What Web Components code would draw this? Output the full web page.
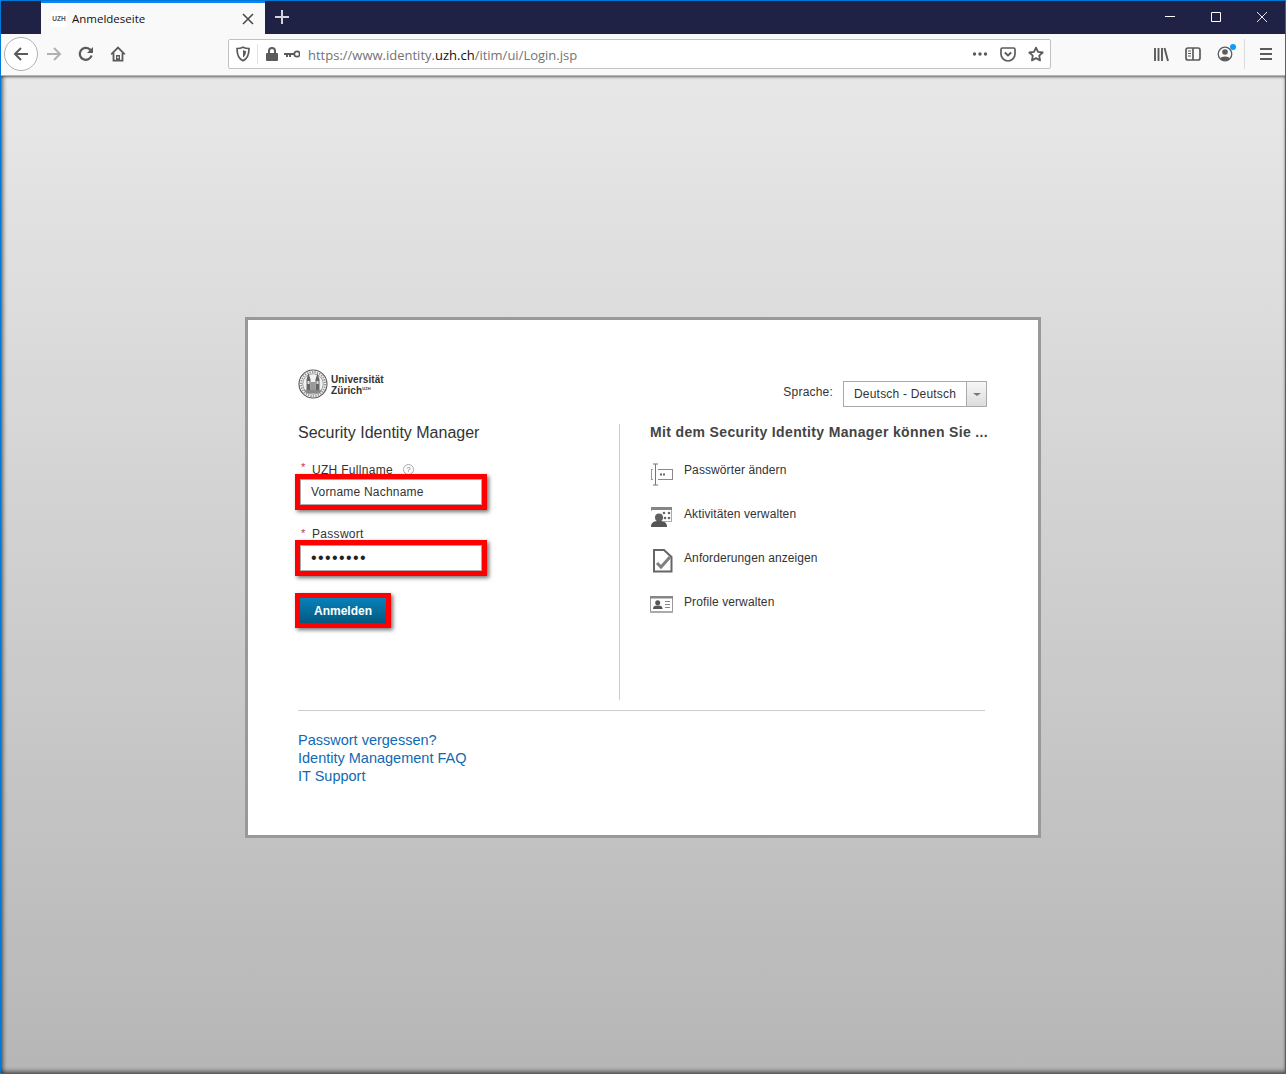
<!DOCTYPE html>
<html lang="de">
  <head>
    <meta charset="UTF-8" />
    <title>Anmeldeseite</title>
    <style>
      html, body { margin: 0; height: 100%; }
      body {
        width: 1286px;
        height: 1074px;
        overflow: hidden;
        display: flex;
        flex-direction: column;
        box-sizing: border-box;
        border: 1px solid #0078d7;
        font-family: "Liberation Sans", Arial, sans-serif;
      }
      login-card a { color: inherit; text-decoration: none; display: block; }
    </style>
  </head>
  <body>
    <browser-tabs title-text="Anmeldeseite"></browser-tabs>
    <browser-toolbar></browser-toolbar>
    <login-page>
      <login-card>
        <a slot="links" href="#">Passwort vergessen?</a>
        <a slot="links" href="#">Identity Management FAQ</a>
        <a slot="links" href="#">IT Support</a>
        <feature-item slot="features" icon="password">Passwörter ändern</feature-item>
        <feature-item slot="features" icon="activity">Aktivitäten verwalten</feature-item>
        <feature-item slot="features" icon="request">Anforderungen anzeigen</feature-item>
        <feature-item slot="features" icon="profile">Profile verwalten</feature-item>
      </login-card>
    </login-page>

    <script>
      // toolbar glyphs, all in a 16x16 box
      const TOOL_ICONS = {
        back: '<path d="M15 8H2M8 2L2 8l6 6" fill="none" stroke-width="2"/>',
        forward: '<path d="M1 8h13M8 2l6 6-6 6" fill="none" stroke-width="2"/>',
        reload: '<path d="M13.600 9.500A6 6 0 1 1 11.800 3.400L14 5.500" fill="none" stroke-width="2.200"/><path d="M15 1v6H9z" stroke="none"/>',
        home: '<path d="M1.200 8.300L8 1.500l6.800 6.800" fill="none" stroke-width="1.800"/><path d="M3.500 7v7.600h9V7" fill="none" stroke-width="1.800"/><path fill-rule="evenodd" d="M6 9h4v6H6zM7.300 10.500v1.800h1.400v-1.800z" stroke="none"/>',
        library: '<path d="M2 2v13M5.500 2v13M9 2v13M11.500 2l3.500 13" fill="none" stroke-width="1.900"/>',
        sidebar: '<rect x="1" y="2" width="14" height="12" rx="2" fill="none" stroke-width="1.700"/><path d="M8 2v12" fill="none" stroke-width="1.700"/><path d="M3 5h3M3 7.500h3M3 10h3" fill="none" stroke-width="1"/>',
        account: '<circle cx="8" cy="8" r="6.800" fill="none" stroke-width="1.300"/><circle cx="8" cy="6" r="2.800" stroke="none"/><path d="M3.200 12.500C4 9.800 12 9.800 12.800 12.500A6.500 6.500 0 0 1 3.200 12.500z" stroke="none"/>',
        menu: '<path d="M2 3h12M2 8h12M2 13h12" fill="none" stroke-width="2"/>',
        shield: '<path d="M8 1.200c2 1 4 1.300 6 1.300 0 5-1 10-6 12.300C3 12.500 2 7.500 2 2.500c2 0 4-.3 6-1.300z" fill="none" stroke-width="1.700"/><path d="M8 4v7.500c2-1 3-3.500 3-6.500-1 0-2-.3-3-1z" stroke="none"/>',
        lock: '<path d="M3 7h10a1 1 0 0 1 1 1v6a1 1 0 0 1-1 1H3a1 1 0 0 1-1-1V8a1 1 0 0 1 1-1z" stroke="none"/><path d="M5 7.500V5a3 3 0 0 1 6 0v2.500" fill="none" stroke-width="2"/>',
        key: '<circle cx="13" cy="8" r="2.700" fill="none" stroke-width="1.700"/><path d="M0 7h10.500v2H7v2H5V9H4v2H2V9H0z" stroke="none"/>',
        dots: '<circle cx="2.500" cy="8" r="1.700" stroke="none"/><circle cx="8" cy="8" r="1.700" stroke="none"/><circle cx="13.500" cy="8" r="1.700" stroke="none"/>',
        pocket: '<path d="M2.500 2h11A1.500 1.500 0 0 1 15 3.500V8a7 7 0 0 1-14 0V3.500A1.500 1.500 0 0 1 2.500 2z" fill="none" stroke-width="1.700"/><path d="M4.800 6.500L8 9.500l3.200-3" fill="none" stroke-width="1.900"/>',
        star: '<path d="M8 1.600l2 4.300 4.700.6-3.500 3.200.9 4.700L8 12.100l-4.100 2.300.9-4.700L1.300 6.500l4.700-.6z" fill="none" stroke-width="1.800" stroke-linejoin="round"/>'
      };

      class ToolIcon extends HTMLElement {
        constructor() {
          super();
          const shadow = this.attachShadow({ mode: "open" });
          const color = this.getAttribute("color") || "#5b5b5c";
          shadow.innerHTML = `
            <style>
              :host { display: flex; align-items: center; justify-content: center; width: 32px; height: 32px; flex: none; position: relative; }
              :host([slim]) { width: 28px; }
              svg { width: 16px; height: 16px; display: block; }
            </style>
            <svg viewBox="0 0 16 16" fill="${color}" stroke="${color}">${TOOL_ICONS[this.getAttribute("name")]}</svg>
            <slot></slot>`;
        }
      }
      customElements.define("tool-icon", ToolIcon);

      class BrowserTabs extends HTMLElement {
        constructor() {
          super();
          const shadow = this.attachShadow({ mode: "open" });
          shadow.innerHTML = `
            <style>
              :host { display: flex; height: 33px; background: #1f2244; flex: none; font-family: "Open Sans", sans-serif; }
              .tab { margin-left: 40px; width: 224px; height: 33px; box-sizing: border-box; background: #f9f9fa; border-top: 2px solid #0a84ff; display: flex; align-items: center; padding-left: 10px; color: #111; font-size: 11.500px; }
              .fav { width: 16px; height: 16px; background: #fff; color: #555; font: bold 6.500px "Liberation Sans", sans-serif; display: flex; align-items: center; justify-content: center; margin-right: 5px; }
              .label { flex: 1; }
              .close { width: 34px; display: flex; justify-content: center; }
              .plus { width: 34px; display: flex; justify-content: center; align-items: center; margin-bottom: 2px; }
              .spacer { flex: 1; }
              .win { width: 46px; display: flex; justify-content: center; align-items: center; margin-bottom: 2px; }
              svg { display: block; }
            </style>
            <div class="tab">
              <span class="fav">UZH</span>
              <span class="label">${this.getAttribute("title-text")}</span>
              <span class="close"><svg width="12" height="12" viewBox="0 0 12 12"><path d="M1 1l10 10M11 1L1 11" stroke="#474749" stroke-width="1.500"/></svg></span>
            </div>
            <span class="plus"><svg width="14" height="14" viewBox="0 0 14 14"><path d="M7 0v14M0 7h14" stroke="#d4d5dc" stroke-width="2"/></svg></span>
            <span class="spacer"></span>
            <span class="win"><svg width="10" height="10" viewBox="0 0 10 10"><path d="M0 4.500h10" stroke="#fff"/></svg></span>
            <span class="win"><svg width="10" height="10" viewBox="0 0 10 10"><path d="M.5.500h9v9h-9z" fill="none" stroke="#fff"/></svg></span>
            <span class="win"><svg width="10" height="10" viewBox="0 0 10 10"><path d="M0 0l10 10M10 0L0 10" stroke="#fff" stroke-width=".9"/></svg></span>`;
        }
      }
      customElements.define("browser-tabs", BrowserTabs);

      class BrowserToolbar extends HTMLElement {
        constructor() {
          super();
          const shadow = this.attachShadow({ mode: "open" });
          shadow.innerHTML = `
            <style>
              :host { display: flex; align-items: center; height: 42px; flex: none; box-sizing: border-box; background: #f9f9fa; border-bottom: 1px solid #b4b4b4; padding: 0 0 1px 3px; font-family: "Open Sans", sans-serif; }
              .back { width: 34px; height: 34px; box-sizing: border-box; border: 1px solid #b1b1b3; border-radius: 50%; background: #fff; display: flex; align-items: center; justify-content: center; flex: none; }
              .url { margin-left: 94px; width: 823px; height: 30px; box-sizing: border-box; border: 1px solid #c2c2c4; border-radius: 2px; background: #fff; display: flex; align-items: center; flex: none; }
              .sep { width: 1px; height: 20px; background: #e3e3e5; flex: none; }
              .text { flex: 1; font-size: 13px; color: #737373; white-space: nowrap; margin: 2px 0 0 6px; }
              .text b { font-weight: 400; color: #111; }
              .badge { position: absolute; left: 21px; top: 6px; width: 6px; height: 6px; border-radius: 50%; background: #0a9dff; }
              .gap { width: 94px; flex: none; }
              .bar { width: 1px; height: 30px; background: #dcdcde; margin: 0 5px 0 3px; flex: none; }
            </style>
            <span class="back"><tool-icon name="back"></tool-icon></span>
            <tool-icon name="forward" color="#b1b1b3"></tool-icon>
            <tool-icon name="reload"></tool-icon>
            <tool-icon name="home"></tool-icon>
            <div class="url">
              <tool-icon name="shield" slim></tool-icon>
              <span class="sep"></span>
              <tool-icon name="lock" slim></tool-icon>
              <tool-icon name="key" style="width:20px;margin-left:-4px"></tool-icon>
              <span class="text">https://www.identity.<b>uzh.ch</b>/itim/ui/Login.jsp</span>
              <tool-icon name="dots" slim></tool-icon>
              <tool-icon name="pocket" slim></tool-icon>
              <tool-icon name="star" slim></tool-icon>
            </div>
            <span class="gap"></span>
            <tool-icon name="library"></tool-icon>
            <tool-icon name="sidebar"></tool-icon>
            <tool-icon name="account"><span class="badge"></span></tool-icon>
            <span class="bar"></span>
            <tool-icon name="menu"></tool-icon>`;
        }
      }
      customElements.define("browser-toolbar", BrowserToolbar);

      class LoginPage extends HTMLElement {
        constructor() {
          super();
          this.attachShadow({ mode: "open" }).innerHTML = `
            <style>
              :host { display: flex; flex: 1; justify-content: center; align-items: flex-start; box-sizing: border-box; padding-top: 241px; background: linear-gradient(#e8e8e8, #b6b6b6); box-shadow: inset 4px 0 4px -2px rgba(0,0,0,.55), inset -2px 0 3px -2px rgba(0,0,0,.3), inset 0 -4px 4px -2px rgba(0,0,0,.45), inset 0 3px 3px -2px rgba(0,0,0,.5); }
            </style>
            <slot></slot>`;
        }
      }
      customElements.define("login-page", LoginPage);

      // red annotation frame, lies over the label above it
      class RedMark extends HTMLElement {
        constructor() {
          super();
          this.attachShadow({ mode: "open" }).innerHTML = `
            <style>
              :host { display: block; position: relative; box-sizing: border-box; margin-left: -3px; width: 192px; height: 36px; border: 5px solid #f00; box-shadow: 2px 2px 4px rgba(0,0,0,.55); }
              :host([small]) { width: 96px; height: 35px; }
            </style>
            <slot></slot>`;
        }
      }
      customElements.define("red-mark", RedMark);

      class FormField extends HTMLElement {
        constructor() {
          super();
          const help = this.hasAttribute("help") ? '<span class="help">?</span>' : "";
          this.attachShadow({ mode: "open" }).innerHTML = `
            <style>
              :host { display: block; }
              .label { height: 12px; font-size: 12px; line-height: var(--label-line, 14px); color: #333; display: flex; letter-spacing: .3px; padding-left: 3px; }
              .star { color: #c33; width: 11px; font-size: 11px; line-height: 11px; flex: none; }
              .help { margin-left: 10px; width: 11px; height: 11px; box-sizing: border-box; border: 1px solid #aaa; border-radius: 50%; font-size: 8px; line-height: 9px; text-align: center; color: #777; letter-spacing: 0; margin-top: 2px; }
              .box { height: 26px; box-sizing: border-box; border: 1px solid #aaa; background: #fff; padding-left: 10px; font-size: 12px; line-height: 24px; color: #333; letter-spacing: .2px; }
              .dots { letter-spacing: 1.400px; color: #222; font-size: 16px; }
            </style>
            <div class="label"><span class="star">*</span>${this.getAttribute("label")}${help}</div>
            <red-mark><div class="box ${this.hasAttribute("secret") ? "dots" : ""}">${this.getAttribute("value")}</div></red-mark>`;
        }
      }
      customElements.define("form-field", FormField);

      const FEATURE_ICONS = {
        password: '<path d="M8 8h15v11H8V18h14V9H8z" fill="#8a8a8a"/><path d="M1 8h2v1H2v9h1v1H1z" fill="#999"/><path d="M5 3h1v21H5zM3 2.500h5v1H3zM3 23.500h5v1H3z" fill="#777"/><path d="M10 12.500h2v2h-2zM13 12.500h2v2h-2z" fill="#666"/>',
        activity: '<path d="M1 2h21v15h-8v-1h7V5H2v1H1z" fill="#aaa"/><path d="M1 2h21v3H1z" fill="#858585"/><circle cx="14" cy="8" r="1.300" fill="#666"/><circle cx="19" cy="8" r="1.300" fill="#666"/><circle cx="15" cy="13" r="1.300" fill="#666"/><circle cx="19" cy="13" r="1.300" fill="#666"/><circle cx="9" cy="12.500" r="4" fill="#606060"/><path d="M1 22c0-5 3-6 8-6s8 1 8 6z" fill="#555"/>',
        request: '<path d="M4 1h10l7.500 7v14.500H4z" fill="#fff" stroke="#666" stroke-width="2"/><path d="M7 14l4 4 9-10" fill="none" stroke="#808080" stroke-width="3"/>',
        profile: '<rect x=".5" y="3.500" width="22" height="16" fill="#fff" stroke="#999"/><path d="M0 3h23v2.500H0z" fill="#858585"/><path d="M0 18h23v2H0z" fill="#aaa"/><circle cx="7.700" cy="9.700" r="2.500" fill="#555"/><path d="M3 16c0-3 2-3.500 4.700-3.500s4.800.5 4.800 3.500z" fill="#555"/><path d="M15 8.500h5M15 11.500h5M15 14.500h5" stroke="#888"/>'
      };

      class FeatureItem extends HTMLElement {
        constructor() {
          super();
          this.attachShadow({ mode: "open" }).innerHTML = `
            <style>
              :host { display: flex; height: 44px; font-size: 12px; line-height: 14px; color: #333; }
              svg { width: 24px; height: 26px; flex: none; margin-right: 10px; overflow: visible; }
              .text { margin-top: 2px; letter-spacing: .1px; }
            </style>
            <svg viewBox="0 0 24 26">${FEATURE_ICONS[this.getAttribute("icon")]}</svg>
            <span class="text"><slot></slot></span>`;
        }
      }
      customElements.define("feature-item", FeatureItem);

      class UzhLogo extends HTMLElement {
        constructor() {
          super();
          this.attachShadow({ mode: "open" }).innerHTML = `
            <style>
              :host { display: flex; align-items: flex-start; align-self: flex-start; gap: 3px; height: 32px; }
              svg { width: 30px; height: 30px; flex: none; }
              .name { font-size: 10px; line-height: 11px; font-weight: bold; color: #333; padding-top: 5px; letter-spacing: .1px; }
              sup { font-size: 4px; line-height: 0; vertical-align: 4px; }
            </style>
            <svg viewBox="0 0 30 30">
              <circle cx="15" cy="15" r="14" fill="#fff" stroke="#555" stroke-width="1.100"/>
              <circle cx="15" cy="15" r="12" fill="none" stroke="#999" stroke-width="2" stroke-dasharray="1.500 1"/>
              <circle cx="15" cy="15" r="10.300" fill="#f2f2f2" stroke="#777" stroke-width=".7"/>
              <path d="M10.500 4L12.500 10.500V21H8.500V10.500zM19.500 4L21.500 10.500V21h-4V10.500z" fill="#666"/>
              <path d="M12.500 13h5v8h-5z" fill="#999"/>
              <path d="M9.500 12h2v3h-2zM18.500 12h2v3h-2z" fill="#ddd"/>
              <path d="M6 21h18l-2.500 3.500h-13z" fill="#888"/>
            </svg>
            <div class="name">Universität<br>Zürich<sup>UZH</sup></div>`;
        }
      }
      customElements.define("uzh-logo", UzhLogo);

      class LanguageSelect extends HTMLElement {
        constructor() {
          super();
          this.attachShadow({ mode: "open" }).innerHTML = `
            <style>
              :host { display: flex; align-items: center; font-size: 12px; color: #333; letter-spacing: .2px; margin-right: -2px; }
              .lbl { margin: -4px 10px 0 0; }
              .sel { width: 144px; height: 26px; box-sizing: border-box; border: 1px solid #aaa; display: flex; background: #fff; }
              .val { flex: 1; padding-left: 10px; line-height: 24px; }
              .btn { width: 20px; box-sizing: border-box; border-left: 1px solid #aaa; background: linear-gradient(#f7f7f7, #dcdcdc); display: flex; align-items: center; justify-content: center; }
              .btn i { width: 0; height: 0; border: 4px solid transparent; border-top: 3px solid #777; border-bottom: 0; }
            </style>
            <span class="lbl">Sprache:</span>
            <div class="sel"><span class="val">Deutsch - Deutsch</span><span class="btn"><i></i></span></div>`;
        }
      }
      customElements.define("language-select", LanguageSelect);

      class LoginCard extends HTMLElement {
        constructor() {
          super();
          this.attachShadow({ mode: "open" }).innerHTML = `
            <style>
              :host { display: block; box-sizing: border-box; width: 796px; height: 521px; border: 3px solid #999; background: #fff; padding: 49px 53px 0 50px; }
              header { display: flex; justify-content: space-between; align-items: flex-end; height: 38px; }
              .cols { display: flex; margin-top: 17px; height: 276px; }
              .left { width: 321px; flex: none; border-right: 1px solid #ccc; }
              .right { padding-left: 30px; }
              h1 { margin: 0 0 20px; font-size: 16px; line-height: 18px; font-weight: 400; color: #333; }
              h2 { margin: 0 0 21px; font-size: 14px; line-height: 16px; font-weight: bold; color: #444; white-space: nowrap; letter-spacing: .35px; }
              form-field + form-field { margin-top: 18px; }
              .submit { margin-top: 17px; }
              .btn { height: 25px; text-align: center; font-size: 12px; font-weight: bold; line-height: 26px; color: #fff; background: linear-gradient(#0781bb, #04597f); }
              hr { margin: 10px 0 0; border: 0; border-top: 1px solid #ccc; }
              .links { margin-top: 20px; font-size: 14.500px; line-height: 18px; color: #1069b3; }
            </style>
            <header><uzh-logo></uzh-logo><language-select></language-select></header>
            <div class="cols">
              <div class="left">
                <h1>Security Identity Manager</h1>
                <form-field style="--label-line:16px" label="UZH Fullname" value="Vorname Nachname" help></form-field>
                <form-field style="--label-line:12px" label="Passwort" value="••••••••" secret></form-field>
                <red-mark class="submit" small><div class="btn">Anmelden</div></red-mark>
              </div>
              <div class="right">
                <h2>Mit dem Security Identity Manager können Sie ...</h2>
                <slot name="features"></slot>
              </div>
            </div>
            <hr>
            <div class="links"><slot name="links"></slot></div>`;
        }
      }
      customElements.define("login-card", LoginCard);
    </script>
  </body>
</html>
